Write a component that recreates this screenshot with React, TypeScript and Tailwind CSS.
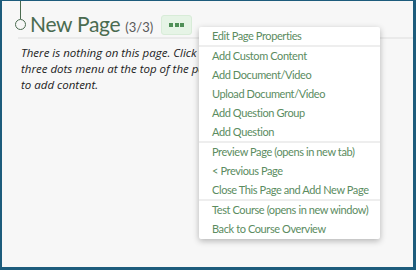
const menuGroups: string[][] = [
  ["Edit Page Properties"],
  [
    "Add Custom Content",
    "Add Document/Video",
    "Upload Document/Video",
    "Add Question Group",
    "Add Question",
  ],
  ["Preview Page (opens in new tab)", "< Previous Page", "Close This Page and Add New Page"],
  ["Test Course (opens in new window)", "Back to Course Overview"],
];

export default function App() {
  return (
    <div
      className="relative w-[416px] h-[270px] bg-[#f7f7f7] border-[#1d5c7c] border-t border-l-2 border-r-[3px] border-b-[3px] overflow-hidden"
      style={{ fontFamily: "Lato, 'Liberation Sans', sans-serif" }}
    >
      {/* header */}
      <div className="flex items-start h-[36px] pl-[13px]">
        <div className="flex flex-col items-center w-[11px]">
          <div className="w-[1.5px] h-[18px] bg-[#4a6b50]" />
          <div className="w-[11px] h-[11px] rounded-full border-[1.5px] border-[#4a6b50]" />
        </div>
        <h1 className="ml-[4px] mt-[11px] text-[21px] leading-[24px] tracking-[-0.3px] text-[#4a6b50] whitespace-nowrap">
          New Page<span className="ml-[5px] text-[13px] tracking-normal text-[#5a5a5a]">(3/3)</span>
        </h1>
        <button className="ml-[8px] mt-[14px] w-[31px] h-[20px] flex items-center justify-center gap-[1.5px] rounded-[3px] bg-[#e6f4e6] border border-[#d8ecd8]">
          <span className="w-[4px] h-[4px] bg-[#4f8f57]" />
          <span className="w-[4px] h-[4px] bg-[#4f8f57]" />
          <span className="w-[4px] h-[4px] bg-[#4f8f57]" />
        </button>
      </div>
      <div className="ml-[16px] h-[2px] bg-[#eaeaea]" />

      <p
        className="pl-[19px] pt-[6px] text-[11.5px] leading-[16px] italic text-[#222] whitespace-nowrap"
        style={{ fontFamily: "'Open Sans', 'DejaVu Sans', sans-serif" }}
      >
        There is nothing on this page. Click the
        <br />
        three dots menu at the top of the page
        <br />
        to add content.
      </p>

      {/* dropdown */}
      <div className="absolute left-[197px] top-[26px] w-[181px] bg-white rounded-[2px] shadow-[0_2px_6px_rgba(0,0,0,0.28)]">
        {menuGroups.map((group, gi) => (
          <div key={gi} className={gi > 0 ? "-mt-[1px] border-t-2 border-[#eeeeee]" : ""}>
            {group.map((item) => (
              <div
                key={item}
                className="px-[13px] h-[19px] flex items-center text-[11px] tracking-[-0.4px] text-[#5b8c5f] whitespace-nowrap"
              >
                {item}
              </div>
            ))}
          </div>
        ))}
      </div>
    </div>
  );
}
